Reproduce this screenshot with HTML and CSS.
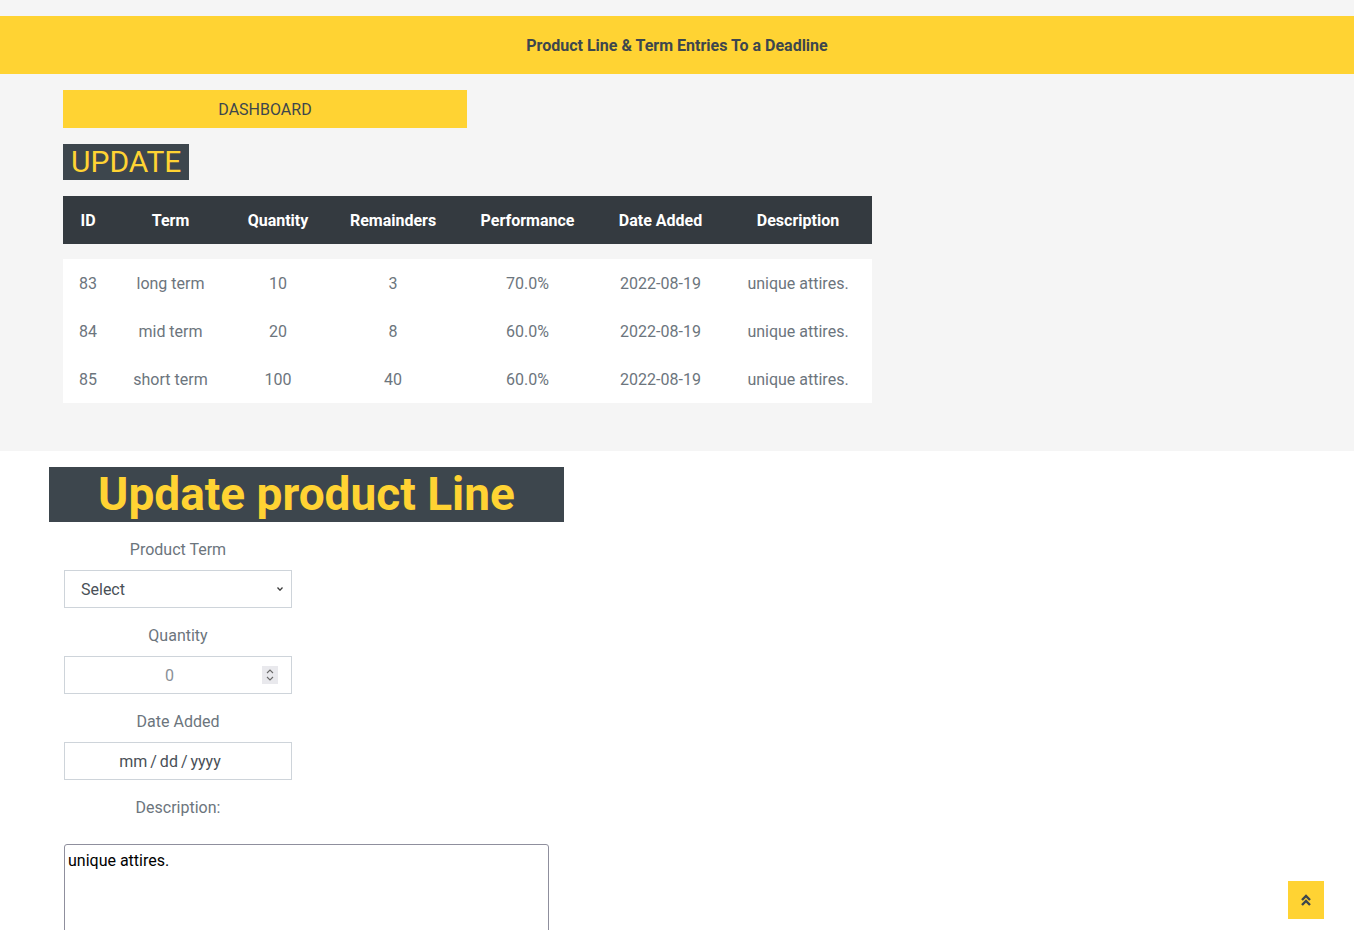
FILE: index.html
```html
<!DOCTYPE html>
<html lang="en">
<head>
<meta charset="utf-8">
<title>Product Line &amp; Term Entries</title>
<link rel="stylesheet" href="styles.css">
</head>
<body>
<div class="top">
  <header class="banner">Product Line &amp; Term Entries To a Deadline</header>
  <section class="summary">
    <a class="dash-btn" href="#">DASHBOARD</a>
    <h3 class="update-title">UPDATE</h3>
    <table class="entries">
      <colgroup>
        <col style="width:50px"><col style="width:115px"><col style="width:100px"><col style="width:130px"><col style="width:139px"><col style="width:127px"><col style="width:148px">
      </colgroup>
      <thead>
        <tr><th>ID</th><th>Term</th><th>Quantity</th><th>Remainders</th><th>Performance</th><th>Date Added</th><th>Description</th></tr>
      </thead>
      <tbody>
        <tr><td>83</td><td>long term</td><td>10</td><td>3</td><td>70.0%</td><td>2022-08-19</td><td>unique attires.</td></tr>
        <tr><td>84</td><td>mid term</td><td>20</td><td>8</td><td>60.0%</td><td>2022-08-19</td><td>unique attires.</td></tr>
        <tr><td>85</td><td>short term</td><td>100</td><td>40</td><td>60.0%</td><td>2022-08-19</td><td>unique attires.</td></tr>
      </tbody>
    </table>
  </section>
</div>

<section class="edit">
  <h1 class="edit-title">Update product Line</h1>
  <form class="edit-form">
    <div class="field">
      <label class="field-label">Product Term</label>
      <div class="control select-box">
        <span class="control-text">Select</span>
        <svg class="chev" width="6" height="4" viewBox="0 0 6 4"><path d="M0.5 0.5 L3 3.2 L5.5 0.5" fill="none" stroke="#3d3d3d" stroke-width="1.3"/></svg>
      </div>
    </div>
    <div class="field">
      <label class="field-label">Quantity</label>
      <div class="control number-box">
        <span class="control-text num">0</span>
        <span class="spinner">
          <svg width="10" height="14" viewBox="0 0 10 14"><path d="M2 5 L5 2 L8 5" fill="none" stroke="#6a6a6a" stroke-width="1.1"/><path d="M2 9 L5 12 L8 9" fill="none" stroke="#6a6a6a" stroke-width="1.1"/></svg>
        </span>
      </div>
    </div>
    <div class="field">
      <label class="field-label">Date Added</label>
      <div class="control date-box"><span class="control-text date">mm / dd / yyyy</span></div>
    </div>
    <div class="field desc">
      <label class="field-label">Description:</label>
      <textarea class="desc-area">unique attires.</textarea>
    </div>
  </form>
</section>

<a class="back-top" href="#">
  <svg width="12" height="14" viewBox="0 0 12 14"><path d="M2 7 L6 3 L10 7" fill="none" stroke="#3d464d" stroke-width="2.4"/><path d="M2 12 L6 8 L10 12" fill="none" stroke="#3d464d" stroke-width="2.4"/></svg>
</a>
</body>
</html>
```
FILE: styles.css
```css
* { box-sizing: border-box; }
html, body { margin: 0; padding: 0; }
body {
  font-family: Roboto, "Liberation Sans", sans-serif;
  font-size: 16px;
  color: #6c757d;
  background: #ffffff;
}
.top {
  background: #f5f5f5;
  padding-top: 16px;
  padding-bottom: 48px;
}
.banner {
  background: #ffd333;
  height: 58px;
  display: flex;
  align-items: center;
  justify-content: center;
  font-weight: 700;
  color: #3d464d;
  font-size: 16px;
}
.summary {
  padding: 16px 0 0 63px;
  display: flex;
  flex-direction: column;
  align-items: flex-start;
  gap: 16px;
}
.dash-btn {
  display: block;
  width: 404px;
  height: 38px;
  line-height: 39px;
  background: #ffd333;
  color: #3d464d;
  text-align: center;
  text-decoration: none;
  font-size: 16px;
}
.update-title {
  margin: 0;
  background: #3d464d;
  color: #ffd333;
  font-weight: 400;
  font-size: 30px;
  line-height: 36px;
  height: 36px;
  padding: 0 8px;
}
.entries {
  width: 809px;
  table-layout: fixed;
  border-collapse: separate;
  border-spacing: 0;
}
.entries th {
  background: #343a40;
  background-clip: padding-box;
  color: #ffffff;
  font-weight: 700;
  height: 63px;
  border-bottom: 15px solid transparent;
  padding: 0;
  text-align: center;
}
.entries td {
  background: #ffffff;
  height: 48px;
  padding: 0;
  text-align: center;
  color: #6c757d;
}
.edit {
  padding: 16px 0 40px 0;
}
.edit-title {
  margin: 0 0 16px 49px;
  width: 515px;
  height: 55px;
  line-height: 55px;
  background: #3d464d;
  color: #ffd333;
  font-size: 46px;
  font-weight: 700;
  text-align: center;
}
.edit-form {
  padding-left: 64px;
  display: flex;
  flex-direction: column;
  gap: 16px;
}
.field {
  width: 228px;
  display: flex;
  flex-direction: column;
  align-items: center;
  gap: 8px;
}
.field-label {
  display: block;
  line-height: 24px;
  padding-top: 1px;
  margin-top: -1px;
  color: #6c757d;
}
.control {
  width: 228px;
  height: 38px;
  border: 1px solid #ced4da;
  background: #ffffff;
  display: flex;
  align-items: center;
}
.control-text { color: #495057; }
.select-box { padding: 0 8px 0 16px; justify-content: space-between; }
.number-box { padding: 0 13px 0 0; }
.control-text.num { flex: 1; text-align: center; color: #8a9097; padding-left: 12px; }
.spinner {
  width: 16px;
  height: 18px;
  background: #e9e9ed;
  display: flex;
  align-items: center;
  justify-content: center;
}
.date-box { justify-content: center; padding-right: 16px; }
.control-text.date { word-spacing: -1px; }
.field.desc { width: auto; align-items: flex-start; gap: 24px; }
.field.desc .field-label { width: 228px; text-align: center; }
.desc-area {
  width: 485px;
  height: 160px;
  border: 1px solid #8f8f9d;
  border-radius: 3px;
  padding: 6px 3px 3px 3px;
  font-family: Roboto, "Liberation Sans", sans-serif;
  font-size: 16px;
  color: #000000;
  resize: none;
}
.back-top {
  position: fixed;
  right: 30px;
  bottom: 11px;
  width: 36px;
  height: 38px;
  background: #ffd333;
  display: flex;
  align-items: center;
  justify-content: center;
}
```
